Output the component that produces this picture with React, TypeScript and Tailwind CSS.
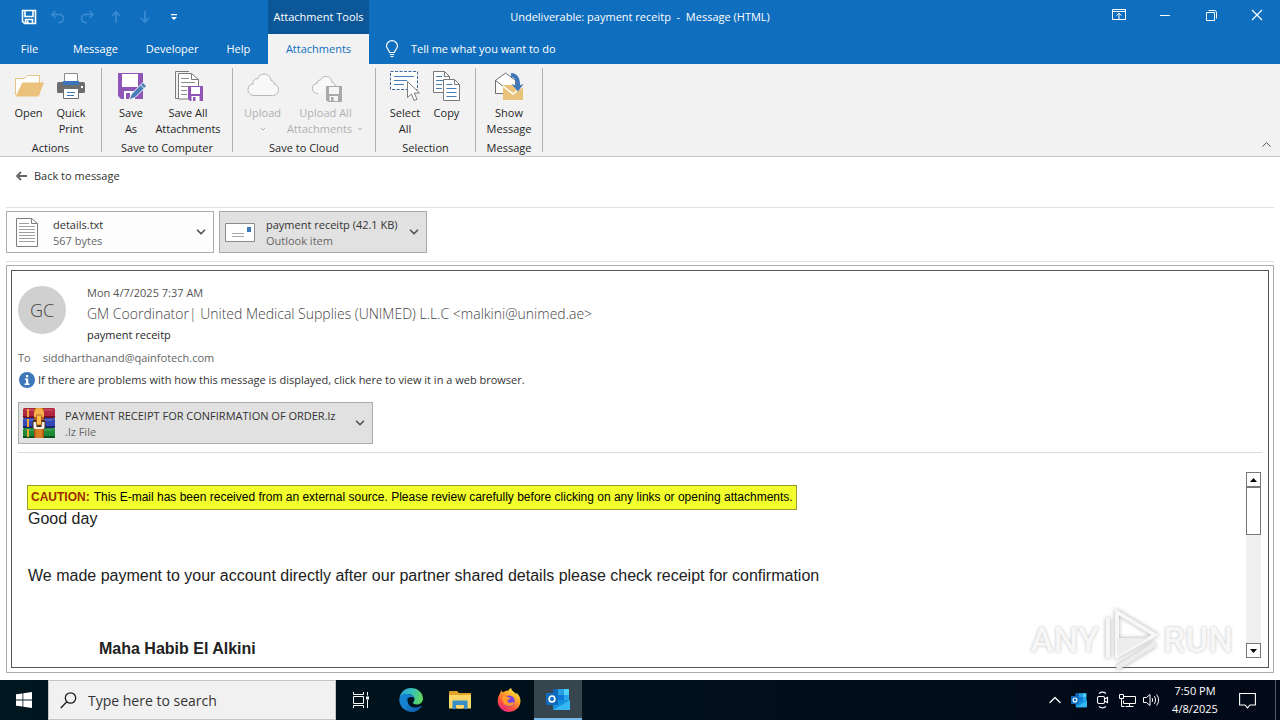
import React from "react";
import { ChevronDown, ChevronUp } from "lucide-react";

type IconProps = { className?: string };

/* ---------- title bar icons ---------- */

const DisketteIcon = () => (
  <svg width="16" height="16" viewBox="0 0 16 16" fill="none" stroke="#fff" strokeWidth="1.6">
    <path d="M1.5 1.5h13v13H3.5l-2-2z" />
    <path d="M4 1.5v6h8v-6M4.5 14.5v-4h7v4" />
    <path d="M6.5 11.5v3" strokeWidth="2" />
  </svg>
);

const UndoIcon = ({ className }: IconProps) => (
  <svg className={className} width="16" height="16" viewBox="0 0 16 16" fill="none" stroke="#3b8bd4" strokeWidth="1.7">
    <path d="M5.5 2 2 5.5 5.5 9M2 5.5h7.5a4 4 0 0 1 0 8H8" />
  </svg>
);

const ArrowIcon = ({ className }: IconProps) => (
  <svg className={className} width="14" height="14" viewBox="0 0 14 14" fill="none" stroke="#3b8bd4" strokeWidth="1.7">
    <path d="M7 13V2M3 6l4-4 4 4" />
  </svg>
);

const CustomizeIcon = () => (
  <svg width="8" height="8" viewBox="0 0 8 8" fill="#fff">
    <path d="M1 1h6v1.3H1zM1 4h6L4 7z" />
  </svg>
);

const RibbonDisplayIcon = () => (
  <svg width="14" height="12" viewBox="0 0 14 12" fill="none" stroke="#fff">
    <path d="M.5 .5h13v10H.5zM.5 2.5h13M7 10V4.5M4.5 6.5 7 4.2l2.5 2.3" />
  </svg>
);

const RestoreIcon = () => (
  <svg width="11" height="11" viewBox="0 0 11 11" fill="none" stroke="#fff">
    <path d="M.5 2.500h8v8h-8zM2.500 .5h6a2 2 0 0 1 2 2v6" />
  </svg>
);

const CloseIcon = () => (
  <svg width="12" height="12" viewBox="0 0 12 12" fill="none" stroke="#fff" strokeWidth="1.2">
    <path d="m1 1 10 10M11 1 1 11" />
  </svg>
);

const BulbIcon = () => (
  <svg width="14" height="18" viewBox="0 0 14 18" fill="none" stroke="#fff" strokeWidth="1.2">
    <path d="M4.5 12.5c0-2.5-3-3.5-3-6.500a5.500 5.300 0 0 1 11 0c0 3-3 4-3 6.500zM4.800 14.500h4.400M5.500 16.500h3" />
  </svg>
);

/* ---------- ribbon icons, all on a 32px grid ---------- */

const FolderIcon = () => (
  <svg width="32" height="32" viewBox="0 0 32 32">
    <path d="M2.500 25V8.500h9l3-3h12v19" fill="#fdfdfd" stroke="#e6c387" />
    <path d="M9.500 12.500H31L25.500 26.500H2.500z" fill="#ebc27c" />
  </svg>
);

const PrinterIcon = () => (
  <svg width="32" height="32" viewBox="0 0 32 32">
    <rect x="2" y="12" width="28" height="11" rx="1.500" fill="#6d6d6d" />
    <path d="M9.500 14V3.500h13V14" fill="#fff" stroke="#8a8a8a" />
    <rect x="8" y="11" width="16" height="4" fill="#3c74b9" />
    <rect x="26" y="16" width="2" height="2" fill="#fff" />
    <path d="M8.500 18.500h15v10h-15z" fill="#fff" stroke="#6d6d6d" />
    <path d="M12 22.500h8M12 25.500h7" stroke="#3c74b9" strokeWidth="1.200" />
  </svg>
);

const SaveAsIcon = () => (
  <svg width="32" height="32" viewBox="0 0 32 32">
    <path d="M3 3h25v26H6l-3-3z" fill="#8f56b8" />
    <path d="M7 4h16v13H7z" fill="#fff" />
    <path d="M9 21h11v8H9z" fill="#fff" />
    <path d="M11 23h4v6h-4z" fill="#8f56b8" />
    <path d="m14 30 2.500-6L28 12.500l3.500 3.500L20 27.500z" fill="#467cb8" stroke="#f2f2f2" />
    <path d="m25.500 15 3.500 3.500" stroke="#fff" />
  </svg>
);

const SaveAllIcon = () => (
  <svg width="32" height="32" viewBox="0 0 32 32">
    <path d="M6 28.500H3.500V1.500H17" fill="none" stroke="#7b7b7b" />
    <path d="M6.500 3.500h13l7 6V29H6.500z" fill="#fff" stroke="#7b7b7b" />
    <path d="M19.500 3.500v6h7" fill="none" stroke="#7b7b7b" />
    <path d="M9 8.500h8M9 12.500h14M9 16.500h8M9 20.500h6M9 24.500h6" stroke="#8d8d8d" />
    <path d="M16 16h15v15H18l-2-2z" fill="#8f56b8" />
    <path d="M19 17h9v7h-9zM19.500 26h8v5h-8z" fill="#fff" />
    <path d="M21 27h2.500v4H21z" fill="#8f56b8" />
  </svg>
);

const CloudIcon = () => (
  <svg width="32" height="32" viewBox="0 0 32 32">
    <path
      d="M7.500 25.500C3 25.500 1 22.500 1 19.500 1 16 3.500 14 6 14c-.5-3 2-5.500 4.500-5C11.500 5.500 14 4 17 4c4 0 6.500 2.500 7 6.500 2 0 3 1.500 3 3.500 3 .5 4.500 3 4.500 5.500 0 3.500-2.500 6-6 6z"
      fill="#f8f8f8"
      stroke="#b5b5b5"
    />
  </svg>
);

const CloudSaveIcon = () => (
  <svg width="32" height="32" viewBox="0 0 32 32">
    <path
      d="M8 23.500c-4 0-5.500-2.500-5.500-5 0-3 2-5 4.500-5 0-2.500 1.500-3.500 3.500-3.500 1-2.500 3-3.500 5.500-3.500 3.500 0 6 2.500 6 6 2 0 3 1.500 3 3.500"
      fill="#f8f8f8"
      stroke="#b5b5b5"
    />
    <path d="M16 16h16v16H18l-2-2z" fill="#a9a9a9" />
    <path d="M19 17h10v7H19zM19.500 26h8.500v5h-8.500z" fill="#f6f6f6" />
    <path d="M21 27h2.500v4H21z" fill="#a9a9a9" />
  </svg>
);

const SelectAllIcon = () => (
  <svg width="32" height="32" viewBox="0 0 32 32">
    <path d="M1.500 1.500h27v18h-27z" fill="#fff" stroke="#3c6aa0" strokeDasharray="3 1.500" />
    <path d="M5 6.500h20M5 10.500h13M5 14.500h10" stroke="#467cb8" />
    <path d="M18.500 11.500v16l4-3.500 2.500 6.500 3-1.200-2.700-6.300h5.200z" fill="#fff" stroke="#7b7b7b" />
  </svg>
);

const CopyIcon = () => (
  <svg width="32" height="32" viewBox="0 0 32 32" fill="#fff" stroke="#7b7b7b">
    <path d="M2.500 1.500h11l5 5v16h-16z" />
    <path d="M13.500 1.500v5h5" fill="none" />
    <path d="M5 6.500h6M5 10.500h8M5 14.500h6M5 18.500h6" stroke="#467cb8" />
    <path d="M12.500 9.500h11l5 5v16h-16z" />
    <path d="M23.500 9.500v5h5" fill="none" />
    <path d="M15.500 14.500h6M15.500 18.500h10M15.500 22.500h10M15.500 26.500h10" stroke="#467cb8" />
  </svg>
);

const ShowMessageIcon = () => (
  <svg width="32" height="32" viewBox="0 0 32 32">
    <path d="M2.500 23.500v-13l10-7.500 10 7.500v13z" fill="#fff" stroke="#6f6f6f" />
    <path d="m2.500 10.500 8 6" stroke="#6f6f6f" />
    <path d="M10 15h20v15H10z" fill="#ebc27c" />
    <path d="m10 16 10 8 10-8" fill="none" stroke="#fff" strokeWidth="1.500" />
    <path d="M18 5c5 0 7.500 4 7 12" fill="none" stroke="#3f78b8" strokeWidth="4" />
    <path d="M18.500 14 25 21.500l5.500-7.500-5.500 2z" fill="#3f78b8" />
  </svg>
);

/* ---------- attachment icons ---------- */

const TextFileIcon = () => (
  <svg width="22" height="29" viewBox="0 0 22 29" fill="#fff" stroke="#7d7d7d">
    <path d="M.5 .5h15l6 5v23H.5z" />
    <path d="M15.500 .5v5h6" fill="none" />
    <path d="M3 5.500h10M3 8.500h16M3 11.500h16M3 14.500h16M3 17.500h16M3 20.500h16M3 23.500h16" stroke="#a0a0a0" />
  </svg>
);

const EnvelopeIcon = () => (
  <svg width="30" height="19" viewBox="0 0 30 19">
    <path d="M.5 .5h29v18H.5z" fill="#fff" stroke="#8c8c8c" />
    <path d="M22 4h4v5h-4z" fill="#3f78b8" />
    <path d="M7 10.500h12M7 13.500h12" stroke="#a8a8a8" />
  </svg>
);

const ArchiveIcon = () => (
  <svg width="32" height="32" viewBox="0 0 32 32">
    <rect x="0" y="1" width="32" height="10" rx="1.500" fill="#b3263f" />
    <rect x="0" y="11" width="32" height="10" rx="1.500" fill="#3346b5" />
    <rect x="0" y="21" width="32" height="10" rx="1.500" fill="#1f8a36" />
    <path d="M0 9h32v2H0z" fill="#6e1327" />
    <path d="M0 19h32v2H0z" fill="#1b246e" />
    <path d="M0 29h32v2H0z" fill="#0d5020" />
    <path d="M2 3h28M2 13h28M2 23h28" stroke="#fff" strokeOpacity=".3" />
    <path d="M4 2h2v8H4zM4 12h2v8H4zM4 22h2v8H4z" fill="#f0a43a" />
    <path d="M11 1h10v30H11z" fill="#a84f14" />
    <path d="M12.500 1h7v30h-7z" fill="#d97f24" />
    <path d="M11 6a5 5 0 0 1 10 0v4H11z" fill="#f7b04a" />
    <rect x="9.500" y="13" width="13" height="9" rx="2" fill="#4a2b1a" />
    <path d="M10.500 15h3v6h-3zM18.500 15h3v6h-3zM11 20h10v2H11z" fill="#f3eee8" />
    <rect x="13.500" y="8" width="5" height="10" rx="1" fill="#ffc04b" stroke="#8a4512" strokeWidth=".7" />
  </svg>
);

const InfoIcon = () => (
  <svg width="16" height="16" viewBox="0 0 16 16">
    <circle cx="8" cy="8" r="8" fill="#3f78b8" />
    <path d="M7 3h2.200v2.200H7zM6 6.500h3.200v5H10.500V13h-5v-1.500H7V8H6z" fill="#fff" />
  </svg>
);

const BackIcon = () => (
  <svg width="12" height="10" viewBox="0 0 12 10" fill="none" stroke="#666" strokeWidth="1.800">
    <path d="M12 5H2M6 1 2 5l4 4" />
  </svg>
);

/* ---------- taskbar icons ---------- */

const WindowsIcon = () => (
  <svg width="16" height="16" viewBox="0 0 16 16" fill="#fff">
    <path d="M0 2.300 6.500 1.400v6.100H0zM7.300 1.300 16 0v7.500H7.300zM0 8.400h6.500v6.200L0 13.700zM7.300 8.400H16V16l-8.700-1.300z" />
  </svg>
);

const SearchIcon = () => (
  <svg width="17" height="17" viewBox="0 0 17 17" fill="none" stroke="#1c1c1c" strokeWidth="1.300">
    <circle cx="10.500" cy="6" r="5.200" />
    <path d="M6.800 9.800.8 16" />
  </svg>
);

const TaskViewIcon = () => (
  <svg width="17" height="16" viewBox="0 0 17 16" fill="none" stroke="#fff">
    <path d="M1.500 4.500h10v7h-10zM1.500 0v2.500h10V0M1.500 16v-2.500h10V16M15.500 0v3.500M15.500 8v8" />
    <path d="M14 4.500h3v3h-3z" fill="#fff" stroke="none" />
  </svg>
);

const EdgeIcon = () => (
  <svg width="24" height="24" viewBox="0 0 24 24">
    <defs>
      <linearGradient id="edge-top" x1="0" x2="1" y1=".3" y2=".5">
        <stop offset="0" stopColor="#2aa5dc" />
        <stop offset=".5" stopColor="#35c1b8" />
        <stop offset="1" stopColor="#63d957" />
      </linearGradient>
      <linearGradient id="edge-low" x1="0" x2="1" y1="0" y2="1">
        <stop offset="0" stopColor="#1a8fdc" />
        <stop offset="1" stopColor="#0c4f9e" />
      </linearGradient>
    </defs>
    <path d="M.5 10C1.500 4 6.200 0 12 0c6.800 0 12 5 12 10.500 0 3.700-3 6-6.200 6-2.300 0-3.800-.8-3.800-1.700 0-.8 1.500-1.300 1.500-3.500C15.500 8 12 6 8.500 6 4.800 6 1.800 8 .5 10z" fill="url(#edge-top)" />
    <path d="M.3 12C.3 8 4 6 8 6c4 0 7 2.300 7.500 4.500-.8-1-2-1.500-3.500-1.500-3 0-5 2.500-5 5.500 0 4.500 3.800 9 8.500 8.800A12 12 0 0 1 .3 12z" fill="#1783d4" />
    <path d="M8.800 11c-1 3.500 1.200 8 6.200 8.500 3 .3 5.500-.7 7-1.700.5-.3 1 .2.700.7C20.500 22 17 24 13.500 24 8 23.500 5 18.500 6.800 14c.4-1.200 1-2.300 2-3z" fill="url(#edge-low)" />
  </svg>
);

const ExplorerIcon = () => (
  <svg width="22" height="20" viewBox="0 0 22 20">
    <path d="M0 2.500C0 1.500.5 1 1.500 1H8l2 2h12v15H0z" fill="#e2a32b" />
    <path d="M0 5h22v13.500H0z" fill="#fcd667" />
    <path d="M3.500 11.500c0-.6.400-1 1-1h13c.6 0 1 .4 1 1V19H15v-4H7v4H3.500z" fill="#3a8ec8" />
    <path d="M8 15h6v3.500H8z" fill="#fcd667" />
  </svg>
);

const FirefoxIcon = () => (
  <svg width="24" height="24" viewBox="0 0 24 24">
    <defs>
      <linearGradient id="fox" x1=".8" x2=".2" y1="0" y2="1">
        <stop offset="0" stopColor="#fff44f" />
        <stop offset=".35" stopColor="#ffa92a" />
        <stop offset=".7" stopColor="#ff4f3f" />
        <stop offset="1" stopColor="#e0208a" />
      </linearGradient>
    </defs>
    <path d="M3 5.500C3.500 4 4.200 3 5 2.300c0 1 .3 1.700.8 2.200C7.500 3 9.500 2.500 11 2.700 12 1.500 13 .5 14.200 0c0 2 1.500 3 3 4.200C18.500 5 19 5.500 19.300 6.500c.3-.5.300-1.200.2-2 2.500 2.500 4 5 4 8.500A11.300 11.300 0 0 1 12 24C5.500 24 .7 19 .7 13c0-3 1-5.500 2.300-7.500z" fill="url(#fox)" />
    <circle cx="12.200" cy="13" r="5.500" fill="#7542e5" />
    <path d="M5 9c2-1.500 4-1 5.500 0 1.300.8 2.500.8 3 1 0 1.200-2.500 1.700-3 2.500-.2 1.500 1 2.500 2.500 2.500 1.500 0 2.500-1 3.500-.5.800.5-.8 3.500-4.500 3.500-4 0-7-4-7-9z" fill="#ff9a2a" />
  </svg>
);

const OutlookIcon = ({ className }: IconProps) => (
  <svg className={className} viewBox="0 0 24 22">
    <path d="M7 1h16v13H7z" fill="#1173c7" />
    <path d="M7 1h5v6H7z" fill="#1066b5" />
    <path d="M12 1h6v6h-6z" fill="#28a0e6" />
    <path d="M18 1h5v6h-5z" fill="#50d0ff" />
    <path d="M12 7h6v6h-6z" fill="#0f78d4" />
    <path d="M18 7h5v6h-5z" fill="#28a8ea" />
    <path d="M7 12h17v8.500c0 .8-.5 1.500-1.500 1.500h-14C7.500 22 7 21.500 7 20.500z" fill="#1490df" />
    <path d="m7 22 17-10v9c0 .6-.4 1-1 1z" fill="#35b8f1" />
    <rect y="5" width="12" height="12" rx="1" fill="#0f6cbd" />
    <ellipse cx="6" cy="11" rx="2.800" ry="3" fill="none" stroke="#fff" strokeWidth="1.700" />
  </svg>
);

const CameraIcon = () => (
  <svg width="14" height="18" viewBox="0 0 14 18" fill="none" stroke="#fff" strokeWidth="1.100">
    <rect x="1.500" y="5.500" width="7" height="7" rx="1.500" />
    <path d="m8.500 8 3-1.500v5l-3-1.500M3 2.500c2-1.500 5-1.500 7 0M3 15.500c2 1.500 5 1.500 7 0" />
  </svg>
);

const NetworkIcon = () => (
  <svg width="17" height="15" viewBox="0 0 17 15" fill="none" stroke="#fff">
    <path d="M5 3.500h11.500v7H4.500v-3M10.500 10.500v3M6.500 13.500h8M.5 1.500h4v4h-4zM2.500 5.500v8h3" />
  </svg>
);

const SoundIcon = () => (
  <svg width="17" height="14" viewBox="0 0 17 14" fill="none" stroke="#fff">
    <path d="M.5 4.500h3l3.500-3v11l-3.500-3h-3zM9 5c.8 1.200.8 2.800 0 4M11.300 3.200c1.700 2.300 1.700 5.300 0 7.600M13.600 1.500c2.600 3.300 2.600 7.700 0 11" />
  </svg>
);

const NotificationIcon = () => (
  <svg width="17" height="17" viewBox="0 0 17 17" fill="none" stroke="#fff" strokeWidth="1.100">
    <path d="M.6 1.500h15.800v11.500H11l-2.500 2.800L6 13H.6z" />
  </svg>
);

/* ---------- building blocks ---------- */

type RibbonButtonProps = {
  icon: React.ReactNode;
  label: string;
  second?: string;
  width: string;
  disabled?: boolean;
  arrow?: boolean;
};

const RibbonButton = ({ icon, label, second, width, disabled, arrow }: RibbonButtonProps) => (
  <button
    type="button"
    disabled={disabled}
    className={`${width} flex flex-col items-center whitespace-nowrap leading-4 ${disabled ? "text-[#b1b1b1]" : "text-[#262626]"}`}
  >
    {icon}
    <span className="mt-[3px]">{label}</span>
    <span className="flex items-center gap-1">
      {second}
      {arrow && <ChevronDown size={8} strokeWidth={3} className="my-1" />}
    </span>
  </button>
);

const RibbonGroup = ({ title, children }: { title: string; children: React.ReactNode }) => (
  <div className="flex flex-col justify-between border-r border-[#b0b0b0] px-2">
    <div className="flex items-start pt-0.5">{children}</div>
    <div className="text-center text-[#262626] leading-4 -mb-1 whitespace-nowrap">{title}</div>
  </div>
);

type AttachmentProps = {
  icon: React.ReactNode;
  name: string;
  detail: string;
  className: string;
};

const Attachment = ({ icon, name, detail, className }: AttachmentProps) => (
  <div className={`flex h-[42px] border ${className}`}>
    <button type="button" className="flex flex-1 items-center text-left">
      <span className="flex w-[39px] justify-center">{icon}</span>
      <span className="flex flex-col whitespace-nowrap pt-0.5 pl-[7px] leading-4">
        <span className="text-[#333]">{name}</span>
        <span className="text-[#666]">{detail}</span>
      </span>
    </button>
    <button type="button" aria-label={`Options for ${name}`} className="flex w-6 items-center justify-center text-[#555]">
      <ChevronDown size={14} strokeWidth={3} />
    </button>
  </div>
);

const Header = () => (
  <header className="bg-[#106ebe] text-white">
    <div className="grid h-[34px] grid-cols-[369px_1fr_369px]">
      <div className="flex">
        <div className="flex flex-1 items-center pl-[14px] *:flex *:w-[29px] *:justify-center">
          <button type="button" aria-label="Save"><DisketteIcon /></button>
          <button type="button" aria-label="Undo"><UndoIcon /></button>
          <button type="button" aria-label="Redo"><UndoIcon className="-scale-x-100" /></button>
          <button type="button" aria-label="Previous item"><ArrowIcon /></button>
          <button type="button" aria-label="Next item"><ArrowIcon className="rotate-180" /></button>
          <button type="button" aria-label="Customize toolbar"><CustomizeIcon /></button>
        </div>
        <div className="flex w-[101px] items-center justify-center whitespace-nowrap bg-[#0c5797]">
          Attachment Tools
        </div>
      </div>
      <h1 className="flex items-center justify-center whitespace-pre">
        {"Undeliverable: payment receitp  -  Message (HTML)"}
      </h1>
      <div className="flex justify-end *:flex *:h-[30px] *:w-[46px] *:items-center *:justify-center">
        <button type="button" aria-label="Ribbon display options"><RibbonDisplayIcon /></button>
        <button type="button" aria-label="Minimize"><span className="h-px w-[10px] bg-white" /></button>
        <button type="button" aria-label="Restore"><RestoreIcon /></button>
        <button type="button" aria-label="Close"><CloseIcon /></button>
      </div>
    </div>
    <nav className="flex h-[30px]">
      <div className="flex w-[369px]">
        <button type="button" className="w-[59px]">File</button>
        <button type="button" className="px-3.5">Message</button>
        <button type="button" className="px-3.5">Developer</button>
        <button type="button" className="px-3.5">Help</button>
        <button type="button" className="ml-auto w-[101px] bg-[#f2f2f2] text-[#106ebe]">Attachments</button>
      </div>
      <button type="button" className="flex items-center gap-3 pl-4">
        <BulbIcon />
        Tell me what you want to do
      </button>
    </nav>
  </header>
);

const Ribbon = () => (
  <div className="flex h-[93px] border-b border-[#c8c8c8] bg-[#f2f2f2] pt-1 pb-1">
    <RibbonGroup title="Actions">
      <RibbonButton icon={<FolderIcon />} label="Open" width="w-[41px]" />
      <RibbonButton icon={<PrinterIcon />} label="Quick" second="Print" width="w-[44px]" />
    </RibbonGroup>
    <RibbonGroup title="Save to Computer">
      <RibbonButton icon={<SaveAsIcon />} label="Save" second="As" width="w-[42px]" />
      <RibbonButton icon={<SaveAllIcon />} label="Save All" second="Attachments" width="w-[72px]" />
    </RibbonGroup>
    <RibbonGroup title="Save to Cloud">
      <RibbonButton icon={<CloudIcon />} label="Upload" width="w-[43px]" disabled arrow />
      <RibbonButton icon={<CloudSaveIcon />} label="Upload All" second="Attachments" width="w-[83px]" disabled arrow />
    </RibbonGroup>
    <RibbonGroup title="Selection">
      <RibbonButton icon={<SelectAllIcon />} label="Select" second="All" width="w-[42px]" />
      <RibbonButton icon={<CopyIcon />} label="Copy" width="w-[41px]" />
    </RibbonGroup>
    <RibbonGroup title="Message">
      <RibbonButton icon={<ShowMessageIcon />} label="Show" second="Message" width="w-[50px]" />
    </RibbonGroup>
    <button type="button" aria-label="Collapse the ribbon" className="ml-auto self-end pr-1.5 text-[#444]">
      <ChevronUp size={15} strokeWidth={1.5} />
    </button>
  </div>
);

const ScrollBar = () => (
  <div className="mr-px flex w-[15px] flex-col bg-[#f0f0f0]">
    <button type="button" aria-label="Scroll up" className="flex h-[15px] items-center justify-center border border-[#777] bg-white">
      <svg width="7" height="4" viewBox="0 0 7 4"><path d="M0 4h7L3.500 0z" /></svg>
    </button>
    <div className="h-12 border border-[#777] bg-white" />
    <button type="button" aria-label="Scroll down" className="mt-auto flex h-[15px] items-center justify-center border border-[#777] bg-white">
      <svg width="7" height="4" viewBox="0 0 7 4"><path d="M0 0h7L3.500 4z" /></svg>
    </button>
  </div>
);

const Watermark = () => (
  <div className="pointer-events-none absolute right-10 bottom-0 flex items-center gap-1 font-['Roboto',sans-serif] text-[35px] leading-none font-medium text-[#f7f7f7] [text-shadow:0_0_3px_#bbb]">
    <span>ANY</span>
    <svg width="56" height="64" viewBox="0 0 56 64" fill="none" stroke="#f7f7f7" strokeWidth="4" className="drop-shadow-[0_0_2px_#aaa]">
      <path d="M14 4v44l38-21zM5 10v40" />
      <path d="M14 30v18l32-18z" fill="#ededed" stroke="none" />
      <path d="m14 60 38-24" stroke="#ececec" strokeWidth="5" />
    </svg>
    <span>RUN</span>
  </div>
);

const MessagePane = () => (
  <section className="relative mt-[3px] mb-[7px] flex flex-1 flex-col border border-[#ababab] p-1">
    <div className="flex flex-1 flex-col border border-[#555] px-1.5 pt-[14px] pb-[9px]">
      <div className="flex items-start gap-[21px]">
        <div className="mt-px flex size-12 items-center justify-center rounded-full bg-[#d0d0d0] text-[18px] font-light text-[#444]">
          GC
        </div>
        <div className="text-[#555] leading-4">
          <div>Mon 4/7/2025 7:37 AM</div>
          <h2 className="text-[14px] leading-[26px] font-light text-[#444]">
            GM Coordinator| United Medical Supplies (UNIMED) L.L.C &lt;malkini@unimed.ae&gt;
          </h2>
          <div className="text-[#262626]">payment receitp</div>
        </div>
      </div>
      <div className="mt-[5px] flex gap-3 text-[#666] leading-5">
        <span>To</span>
        <span>siddharthanand@qainfotech.com</span>
      </div>
      <button type="button" className="mt-px flex items-center gap-[3px] pl-px text-left text-[#333] leading-[22px]">
        <InfoIcon />
        If there are problems with how this message is displayed, click here to view it in a web browser.
      </button>
      <div className="mt-[11px] flex border-b border-[#dcdcdc] pb-2">
        <Attachment
          icon={<ArchiveIcon />}
          name="PAYMENT RECEIPT FOR CONFIRMATION OF ORDER.lz"
          detail=".lz File"
          className="w-[355px] border-[#ababab] bg-[#e1e1e1]"
        />
      </div>
      <div className="mt-[19px] flex flex-1 justify-between">
        <article className="pl-[9px] font-['Liberation_Sans',Arial,sans-serif] text-[16px] leading-[18px] text-[#222]">
          <p className="mt-[13px] w-fit border border-[#9a9a30] bg-[#f3ff2c] px-[3px] text-[12px] leading-[23px] text-black">
            <strong className="mr-1 text-[#9c2a00]">CAUTION:</strong>
            This E-mail has been received from an external source. Please review carefully before clicking on any links or opening attachments.
          </p>
          <p className="pl-px">Good day</p>
          <p className="mt-[39px] pl-px">
            We made payment to your account directly after our partner shared details please check receipt for confirmation
          </p>
          <p className="mt-[55px] pl-[72px] font-bold">Maha Habib El Alkini</p>
        </article>
        <ScrollBar />
      </div>
    </div>
    <Watermark />
  </section>
);

const Taskbar = () => (
  <footer className="flex h-10 bg-linear-to-r from-[#00171f] to-[#020918] text-white">
    <button type="button" aria-label="Start" className="flex w-12 items-center justify-center"><WindowsIcon /></button>
    <label className="flex w-72 items-center gap-[11px] border border-[#c4c4c4] bg-[#f1f1f1] pl-[11px]">
      <SearchIcon />
      <input
        type="text"
        aria-label="Search"
        placeholder="Type here to search"
        className="min-w-0 flex-1 bg-transparent text-[14px] text-[#333] outline-none placeholder:text-[#333]"
      />
    </label>
    <div className="flex gap-px *:flex *:w-12 *:items-center *:justify-center">
      <button type="button" aria-label="Task view" className="mr-0.5"><TaskViewIcon /></button>
      <button type="button" aria-label="Edge"><EdgeIcon /></button>
      <button type="button" aria-label="File Explorer"><ExplorerIcon /></button>
      <button type="button" aria-label="Firefox"><FirefoxIcon /></button>
      <button type="button" aria-label="Outlook" className="border-b-2 border-[#76b9ed] bg-[#36454e]">
        <OutlookIcon className="h-[22px] w-6" />
      </button>
    </div>
    <div className="ml-auto flex *:flex *:w-6 *:items-center *:justify-center">
      <button type="button" aria-label="Show hidden icons"><ChevronUp size={20} strokeWidth={1.5} /></button>
      <button type="button" aria-label="Outlook status"><OutlookIcon className="size-4" /></button>
      <button type="button" aria-label="Meet now"><CameraIcon /></button>
      <button type="button" aria-label="Network"><NetworkIcon /></button>
      <button type="button" aria-label="Volume"><SoundIcon /></button>
    </div>
    <div className="flex w-16 flex-col justify-center text-center leading-[18px]">
      <time>7:50 PM</time>
      <time>4/8/2025</time>
    </div>
    <button type="button" aria-label="Notifications" className="mr-2 flex w-10 items-center justify-center">
      <NotificationIcon />
    </button>
    <button type="button" aria-label="Show desktop" className="w-[5px] border-l border-[#555c68]" />
  </footer>
);

const App = () => {
  return (
    <div className="flex min-h-screen flex-col bg-white font-['Open_Sans','Noto_Sans',sans-serif] text-[11px]">
      <Header />
      <Ribbon />
      <main className="flex flex-1 flex-col px-1.5">
        <div className="flex h-[51px] items-start border-b border-[#e1e1e1] pt-[10px] pl-[9px]">
          <button type="button" className="flex items-center gap-[7px] leading-[18px] text-[#333]">
            <BackIcon />
            Back to message
          </button>
        </div>
        <div className="flex gap-[5px] border-b border-[#e1e1e1] pt-[3px] pb-2">
          <Attachment
            icon={<TextFileIcon />}
            name="details.txt"
            detail="567 bytes"
            className="w-52 border-[#ababab] bg-[#fdfdfd]"
          />
          <Attachment
            icon={<EnvelopeIcon />}
            name="payment receitp (42.1 KB)"
            detail="Outlook item"
            className="w-52 border-[#ababab] bg-[#e1e1e1]"
          />
        </div>
        <MessagePane />
      </main>
      <Taskbar />
    </div>
  );
};

export default App;
